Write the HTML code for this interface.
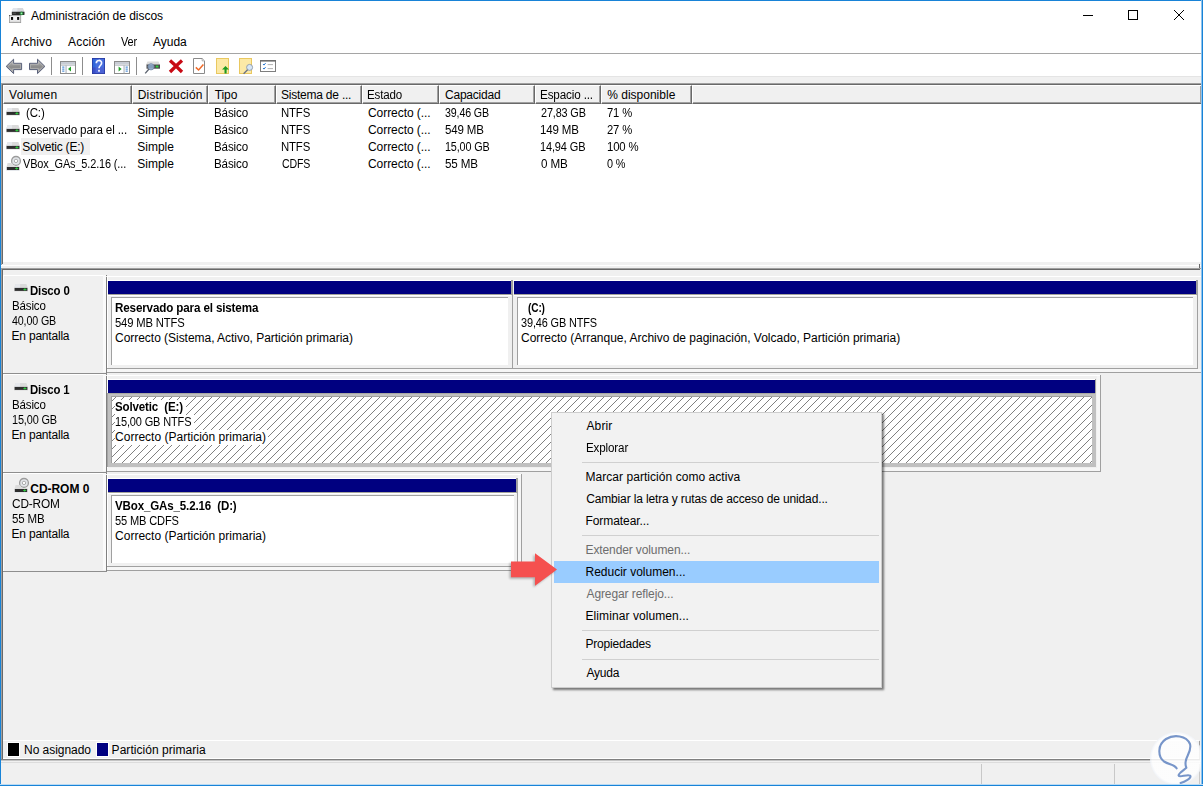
<!DOCTYPE html>
<html lang="es">
<head>
<meta charset="utf-8">
<title>Administración de discos</title>
<style>
html,body{margin:0;padding:0;overflow:hidden;}
html{width:1203px;height:786px;}
body{width:1203px;height:786px;position:relative;overflow:hidden;background:#fff;
 font-family:"Liberation Sans",sans-serif;font-size:12px;color:#000;}
.a{position:absolute;}
.t{position:absolute;white-space:nowrap;line-height:15px;height:15px;transform-origin:0 0;}
.g{background:#f0f0f0;}
.w{background:#fff;}
.d1{background:#a0a0a0;}
.d2{background:#696969;}
.nv{background:#000080;}
.hc{position:absolute;top:85px;height:19px;box-sizing:border-box;background:#f0f0f0;
 border-top:1px solid #fff;border-left:1px solid #fff;border-bottom:1px solid #696969;border-right:1px solid #696969;}
.hc:after{content:"";position:absolute;right:0;top:0;bottom:0;width:1px;background:#a0a0a0;}
.hc:before{content:"";position:absolute;left:0;right:0;bottom:0;height:1px;background:#a0a0a0;}
.pb{position:absolute;box-sizing:border-box;background:#fff;border-top:1px solid #a0a0a0;border-left:1px solid #a0a0a0;}
.mi{position:absolute;left:552px;}
.sep{position:absolute;left:582px;width:297px;height:1px;background:#d0d0d0;}
svg{position:absolute;overflow:visible;}
</style>
</head>
<body>

<!-- ===== window chrome ===== -->
<div class="a g" style="left:0;top:262px;width:1203px;height:524px;"></div>
<div class="a g" style="left:0;top:77px;width:1203px;height:8px;"></div>
<div class="a" style="left:0;top:76px;width:1203px;height:1px;background:#e4e4e4;"></div>
<div class="a" style="left:0;top:53px;width:1203px;height:1px;background:#a5a5a5;"></div>

<!-- title bar icon -->
<svg style="left:5px;top:4px;" width="30" height="24" viewBox="5 4 30 24">
 <path d="M13.1 8H22.9L24.6 11.9H11.6Z" fill="#d6d8dc"/>
 <path d="M13.1 8H17.5L17.2 11.9H11.6Z" fill="#e2e6ec"/>
 <rect x="11.8" y="11.7" width="12.7" height="3.3" rx="0.4" fill="#2c2c2c"/>
 <rect x="12.6" y="12.6" width="3.4" height="1.4" fill="#4a4a4a"/>
 <circle cx="21.5" cy="13.4" r="1.9" fill="#1f8f38" opacity="0.75"/>
 <circle cx="21.5" cy="13.4" r="0.9" fill="#9af0a8"/>
 <rect x="9.4" y="15.5" width="11.3" height="7.1" fill="#dcdcdc" stroke="#9a9a9a" stroke-width="0.8"/>
 <rect x="10.2" y="16.3" width="9.7" height="4.2" fill="#f4f4f6"/>
 <rect x="11" y="17" width="2.1" height="2.9" fill="#0c0c0c"/>
 <rect x="17.1" y="17" width="2.1" height="2.9" fill="#0c0c0c"/>
 <rect x="9" y="15.1" width="1" height="1" fill="#555"/>
</svg>

<!-- caption buttons -->
<div class="a" style="left:1083px;top:15px;width:10px;height:1px;background:#000;"></div>
<div class="a" style="left:1128px;top:10px;width:10px;height:10px;box-sizing:border-box;border:1px solid #000;"></div>
<svg style="left:1173px;top:9px;" width="12" height="12" viewBox="0 0 12 12"><path d="M1 1L11 11M11 1L1 11" stroke="#000" stroke-width="1" fill="none"/></svg>

<!-- ===== toolbar ===== -->
<svg style="left:0;top:54px;" width="300" height="23" viewBox="0 54 300 23">
 <defs>
  <linearGradient id="ga" x1="0" y1="0" x2="0" y2="1"><stop offset="0" stop-color="#bdbdbd"/><stop offset="0.55" stop-color="#8a8a8a"/><stop offset="1" stop-color="#b0b0b0"/></linearGradient>
  <linearGradient id="gh" x1="0" y1="0" x2="1" y2="1"><stop offset="0" stop-color="#2f6fe0"/><stop offset="1" stop-color="#5a5ad0"/></linearGradient>
 </defs>
 <!-- back / forward -->
 <path d="M6.2 66.4L13.6 59.2V63.3H21.6V69.6H13.6V73.6Z" fill="url(#ga)" stroke="#59607a" stroke-width="1" stroke-linejoin="round"/><path d="M7.8 66.4L12.7 61.6V64.3H20.6V68.6H12.7V71.2Z" fill="none" stroke="#c9c9c9" stroke-width="0.6" opacity="0.8"/>
 <path d="M44.9 66.4L37.5 59.2V63.3H29.5V69.6H37.5V73.6Z" fill="url(#ga)" stroke="#59607a" stroke-width="1" stroke-linejoin="round"/><path d="M43.3 66.4L38.4 61.6V64.3H30.5V68.6H38.4V71.2Z" fill="none" stroke="#c9c9c9" stroke-width="0.6" opacity="0.8"/>
 <rect x="51" y="57" width="1" height="18" fill="#8d8d8d"/>
 <!-- show/hide console tree -->
 <g>
  <rect x="60.5" y="61.5" width="15" height="12" fill="#fff" stroke="#8c8c8c"/>
  <rect x="61" y="62" width="14" height="2" fill="#c8ccd4"/>
  <rect x="61" y="64.6" width="14" height="0.9" fill="#9aa0aa"/>
  <rect x="65.6" y="65.5" width="0.9" height="8" fill="#9aa0aa"/>
  <rect x="62.2" y="66.6" width="2.2" height="1" fill="#2b78d0"/><rect x="62.2" y="68.6" width="2.2" height="1" fill="#2b78d0"/><rect x="62.2" y="70.6" width="2.2" height="1" fill="#2b78d0"/>
  <path d="M71 66.6V71.6L68 69.1Z" fill="#1e9e24"/>
 </g>
 <rect x="82" y="57" width="1" height="18" fill="#8d8d8d"/>
 <!-- help -->
 <g>
  <rect x="92" y="58" width="13" height="16" fill="#3a4fc8"/>
  <rect x="92" y="58" width="13" height="9.5" fill="#2f66dc"/>
  <rect x="95.5" y="58" width="9.5" height="16" fill="#5a74e0" opacity="0.55"/>
  <rect x="92.4" y="58.4" width="12.2" height="15.2" fill="none" stroke="#2a3aa0" stroke-width="0.8"/>
  <path d="M96.3 63.2C96.3 59.6 101.6 59.6 101.6 63C101.6 65.4 99 65.6 99 68.2" fill="none" stroke="#f4f6ff" stroke-width="1.7"/>
  <rect x="98.1" y="69.8" width="1.8" height="1.9" fill="#f4f6ff"/>
 </g>
 <!-- show/hide action pane -->
 <g>
  <rect x="114.5" y="61.5" width="15" height="12" fill="#fff" stroke="#8c8c8c"/>
  <rect x="115" y="62" width="14" height="2" fill="#c8ccd4"/>
  <rect x="115" y="64.6" width="14" height="0.9" fill="#9aa0aa"/>
  <rect x="123.6" y="65.5" width="0.9" height="8" fill="#9aa0aa"/>
  <rect x="125.6" y="66.6" width="2.2" height="1" fill="#2b78d0"/><rect x="125.6" y="68.6" width="2.2" height="1" fill="#2b78d0"/><rect x="125.6" y="70.6" width="2.2" height="1" fill="#2b78d0"/>
  <path d="M118.6 66.6V71.6L121.6 69.1Z" fill="#1e9e24"/>
 </g>
 <rect x="136" y="57" width="1" height="18" fill="#8d8d8d"/>
 <!-- rescan (drive + magnifier) -->
 <g>
  <path d="M147.5 61.5h11l1.5 3.2h-14z" fill="#dcdcdc"/>
  <rect x="146.5" y="64.5" width="13.5" height="4.2" fill="#4a4a4a"/>
  <rect x="155.8" y="65.6" width="2.6" height="1.9" fill="#2fd13f"/>
  <circle cx="151" cy="66.8" r="3.1" fill="#9dbfe8" fill-opacity="0.72" stroke="#7488a6" stroke-width="0.9"/>
  <path d="M149 69L145.2 73.4" stroke="#5d6470" stroke-width="1.3"/>
 </g>
 <!-- delete -->
 <path d="M170 60.5L176 66L182 60.5M170 72L176 66L182 72" fill="none" stroke="#c80a14" stroke-width="3.3"/>
 <!-- properties (doc + check) -->
 <g>
  <path d="M193.5 58.5h8.6l2.4 2.4v12.6h-11z" fill="#fff" stroke="#8a8a8a" stroke-linejoin="miter"/>
  <path d="M202.1 58.5v2.4h2.4" fill="#eee" stroke="#9a9a9a" stroke-width="0.7"/>
  <path d="M195.8 67.4L198.6 70L203.4 64.6" fill="none" stroke="#f06a28" stroke-width="1.5"/>
 </g>
 <!-- folder up -->
 <g>
  <rect x="216.5" y="58.5" width="12" height="15" fill="#fce9a6" stroke="#e9c860"/>
  <path d="M225.5 73.5V69.5H223L226.5 66L230 69.5H227.6V73.5Z" fill="#1c9a20" transform="translate(-1,0)"/>
 </g>
 <!-- folder search -->
 <g>
  <rect x="239.5" y="58.5" width="12" height="15" fill="#fce9a6" stroke="#e9c860"/>
  <circle cx="249.6" cy="67.4" r="3" fill="#d6e6f6" stroke="#8c98ac" stroke-width="0.9"/>
  <path d="M247.6 69.8L243.6 73.8" stroke="#6a7280" stroke-width="1.3"/>
 </g>
 <!-- options list -->
 <g>
  <rect x="260.5" y="60.5" width="15" height="11" fill="#fff" stroke="#7e7e7e"/>
  <rect x="260" y="60" width="16" height="1.6" fill="#6e6e6e"/>
  <path d="M263 64l1 1.1l1.6-2M263 68l1 1.1l1.6-2" fill="none" stroke="#2b78d0" stroke-width="1"/>
  <rect x="267.6" y="64.2" width="5.4" height="0.9" fill="#a8a8a8"/><rect x="267.6" y="68.2" width="5.4" height="0.9" fill="#a8a8a8"/>
 </g>
</svg>

<!-- ===== upper list view ===== -->
<div class="a w" style="left:3px;top:104px;width:1198px;height:158px;"></div>
<div class="a d1" style="left:1px;top:83px;width:1200px;height:1px;"></div>
<div class="a d2" style="left:2px;top:84px;width:1199px;height:1px;"></div>
<div class="a d1" style="left:1px;top:83px;width:1px;height:182px;"></div>
<div class="a d2" style="left:2px;top:84px;width:1px;height:180px;"></div>
<div class="a w" style="left:1px;top:265px;width:1200px;height:1px;"></div>
<div class="a d2" style="left:1199px;top:264px;width:1px;height:4px;"></div>
<!-- header cells -->
<div class="hc" style="left:3px;width:129px;"></div>
<div class="hc" style="left:132px;width:76px;"></div>
<div class="hc" style="left:208px;width:68px;"></div>
<div class="hc" style="left:276px;width:86px;"></div>
<div class="hc" style="left:362px;width:77px;"></div>
<div class="hc" style="left:439px;width:96px;"></div>
<div class="hc" style="left:535px;width:66px;"></div>
<div class="hc" style="left:601px;width:91px;"></div>
<div class="hc" style="left:692px;width:509px;border-right:none;"></div>
<!-- selected (unfocused) row label -->
<div class="a g" style="left:21px;top:138px;width:69px;height:17px;"></div>
<!-- row icons -->
<svg style="left:6px;top:104px;" width="14" height="68" viewBox="0 0 14 68">
 
 <g transform="translate(0,4)"><path d="M1.6 0h10.8l1.5 3.9v3.6h-13.8v-3.6z" fill="#dadada"/><path d="M1.6 0h4.6l-0.3 3.9h-5.8z" fill="#e6e8ec"/><rect x="0.6" y="3.9" width="12.8" height="3" fill="#2e2e2e"/><rect x="9.4" y="5" width="3" height="0.9" fill="#2fd13f"/><rect x="10.4" y="4.2" width="1" height="2.4" fill="#2fd13f"/></g>
 <g transform="translate(0,21)"><path d="M1.6 0h10.8l1.5 3.9v3.6h-13.8v-3.6z" fill="#dadada"/><path d="M1.6 0h4.6l-0.3 3.9h-5.8z" fill="#e6e8ec"/><rect x="0.6" y="3.9" width="12.8" height="3" fill="#2e2e2e"/><rect x="9.4" y="5" width="3" height="0.9" fill="#2fd13f"/><rect x="10.4" y="4.2" width="1" height="2.4" fill="#2fd13f"/></g>
 <g transform="translate(0,38)"><path d="M1.6 0h10.8l1.5 3.9v3.6h-13.8v-3.6z" fill="#dadada"/><path d="M1.6 0h4.6l-0.3 3.9h-5.8z" fill="#e6e8ec"/><rect x="0.6" y="3.9" width="12.8" height="3" fill="#2e2e2e"/><rect x="9.4" y="5" width="3" height="0.9" fill="#2fd13f"/><rect x="10.4" y="4.2" width="1" height="2.4" fill="#2fd13f"/></g>
</svg>

<!-- ===== lower graphical view ===== -->
<div class="a d1" style="left:1px;top:268px;width:1200px;height:1px;"></div>
<div class="a d2" style="left:2px;top:269px;width:1198px;height:1px;"></div>
<div class="a d1" style="left:1px;top:268px;width:1px;height:492px;"></div>
<div class="a d2" style="left:2px;top:269px;width:1px;height:491px;"></div>
<div class="a d1" style="left:1199px;top:741px;width:1px;height:19px;"></div>

<!-- disk label frames -->
<div class="a" style="left:3px;top:275px;width:103px;height:1px;background:#fff;"></div>
<div class="a" style="left:103px;top:275px;width:3px;height:97px;background:#fafafa;"></div>
<div class="a" style="left:106px;top:275px;width:1px;height:1px;background:#808080;"></div>
<div class="a" style="left:106px;top:277px;width:1px;height:96px;background:#808080;"></div>
<div class="a" style="left:3px;top:373px;width:104px;height:1px;background:#8e8e8e;"></div>
<div class="a" style="left:3px;top:275px;width:1px;height:98px;background:#fff;"></div>
<div class="a" style="left:107px;top:276px;width:1094px;height:1px;background:#fff;"></div>
<div class="a" style="left:107px;top:276px;width:1px;height:96px;background:#fff;"></div>
<div class="a" style="left:107px;top:369px;width:1094px;height:3px;background:#f6f6f6;"></div>
<div class="a" style="left:107px;top:372px;width:1095px;height:1px;background:#a0a0a0;"></div>
<div class="a" style="left:107px;top:368px;width:1091px;height:1px;background:#a0a0a0;"></div>
<div class="a" style="left:107px;top:280px;width:405px;height:1px;background:#fff;"></div>
<div class="a" style="left:108px;top:281px;width:403px;height:13px;background:#000080;"></div>
<div class="a" style="left:511px;top:280px;width:2px;height:15px;background:#a0a0a0;"></div>
<div class="a" style="left:512px;top:295px;width:1px;height:74px;background:#a0a0a0;"></div>
<div class="a" style="left:108px;top:294px;width:403px;height:1px;background:#a4a49c;"></div>
<div class="a" style="left:108px;top:295px;width:403px;height:1px;background:#fff;"></div>
<div class="pb" style="left:111px;top:297px;width:397px;height:68px;"></div>
<div class="a" style="left:513px;top:280px;width:684px;height:1px;background:#fff;"></div>
<div class="a" style="left:514px;top:281px;width:682px;height:13px;background:#000080;"></div>
<div class="a" style="left:1196px;top:280px;width:2px;height:15px;background:#a0a0a0;"></div>
<div class="a" style="left:1197px;top:295px;width:1px;height:74px;background:#a0a0a0;"></div>
<div class="a" style="left:514px;top:294px;width:682px;height:1px;background:#a4a49c;"></div>
<div class="a" style="left:514px;top:295px;width:682px;height:1px;background:#fff;"></div>
<div class="pb" style="left:517px;top:297px;width:676px;height:68px;"></div>
<div class="a" style="left:3px;top:374px;width:103px;height:1px;background:#fff;"></div>
<div class="a" style="left:103px;top:374px;width:3px;height:97px;background:#fafafa;"></div>
<div class="a" style="left:106px;top:374px;width:1px;height:1px;background:#808080;"></div>
<div class="a" style="left:106px;top:376px;width:1px;height:96px;background:#808080;"></div>
<div class="a" style="left:3px;top:472px;width:104px;height:1px;background:#8e8e8e;"></div>
<div class="a" style="left:3px;top:374px;width:1px;height:98px;background:#fff;"></div>
<div class="a" style="left:107px;top:375px;width:993px;height:1px;background:#fff;"></div>
<div class="a" style="left:107px;top:375px;width:1px;height:96px;background:#fff;"></div>
<div class="a" style="left:107px;top:468px;width:993px;height:3px;background:#f6f6f6;"></div>
<div class="a" style="left:107px;top:471px;width:994px;height:1px;background:#a0a0a0;"></div>
<div class="a" style="left:1097px;top:376px;width:3px;height:95px;background:#f6f6f6;"></div>
<div class="a" style="left:1100px;top:375px;width:1px;height:97px;background:#a0a0a0;"></div>
<div class="a" style="left:107px;top:379px;width:989px;height:1px;background:#fff;"></div>
<div class="a" style="left:108px;top:380px;width:987px;height:13px;background:#000080;"></div>
<div class="a" style="left:1095px;top:379px;width:1px;height:15px;background:#a0a0a0;"></div>
<div class="a" style="left:107px;top:393px;width:989px;height:74px;background:#c0c0c0;"></div>
<div class="a" style="left:107px;top:393px;width:988px;height:1px;background:#a8a8a4;"></div>
<div class="a" style="left:107px;top:393px;width:1px;height:74px;background:#a4a4a4;"></div>
<div class="a" style="left:111px;top:396px;width:981px;height:67px;background:#a0a0a0;"></div>
<div class="a" style="left:112px;top:397px;width:980px;height:66px;background:#fff;"></div>
<svg style="left:0;top:0;" width="1203" height="786"><defs><pattern id="hat" width="8" height="8" patternUnits="userSpaceOnUse" shape-rendering="crispEdges"><rect x="0" y="0" width="1" height="1" fill="#808080"/><rect x="1" y="7" width="1" height="1" fill="#808080"/><rect x="2" y="6" width="1" height="1" fill="#808080"/><rect x="3" y="5" width="1" height="1" fill="#808080"/><rect x="4" y="4" width="1" height="1" fill="#808080"/><rect x="5" y="3" width="1" height="1" fill="#808080"/><rect x="6" y="2" width="1" height="1" fill="#808080"/><rect x="7" y="1" width="1" height="1" fill="#808080"/></pattern></defs><rect x="112" y="397" width="980" height="66" fill="url(#hat)" shape-rendering="crispEdges"/></svg>
<div class="a" style="left:115px;top:400px;width:71px;height:15px;background:#fff;"></div>
<div class="a" style="left:115px;top:415px;width:79px;height:15px;background:#fff;"></div>
<div class="a" style="left:115px;top:430px;width:153px;height:15px;background:#fff;"></div>
<div class="a" style="left:3px;top:473px;width:103px;height:1px;background:#fff;"></div>
<div class="a" style="left:103px;top:473px;width:3px;height:97px;background:#fafafa;"></div>
<div class="a" style="left:106px;top:473px;width:1px;height:1px;background:#808080;"></div>
<div class="a" style="left:106px;top:475px;width:1px;height:96px;background:#808080;"></div>
<div class="a" style="left:3px;top:571px;width:104px;height:1px;background:#8e8e8e;"></div>
<div class="a" style="left:3px;top:473px;width:1px;height:98px;background:#fff;"></div>
<div class="a" style="left:107px;top:474px;width:414px;height:1px;background:#fff;"></div>
<div class="a" style="left:107px;top:474px;width:1px;height:96px;background:#fff;"></div>
<div class="a" style="left:107px;top:567px;width:414px;height:3px;background:#f6f6f6;"></div>
<div class="a" style="left:107px;top:570px;width:415px;height:1px;background:#a0a0a0;"></div>
<div class="a" style="left:518px;top:475px;width:3px;height:95px;background:#f6f6f6;"></div>
<div class="a" style="left:521px;top:474px;width:1px;height:97px;background:#a0a0a0;"></div>
<div class="a" style="left:107px;top:566px;width:411px;height:1px;background:#a0a0a0;"></div>
<div class="a" style="left:107px;top:478px;width:410px;height:1px;background:#fff;"></div>
<div class="a" style="left:108px;top:479px;width:408px;height:13px;background:#000080;"></div>
<div class="a" style="left:516px;top:478px;width:2px;height:15px;background:#a0a0a0;"></div>
<div class="a" style="left:517px;top:493px;width:1px;height:74px;background:#a0a0a0;"></div>
<div class="a" style="left:108px;top:492px;width:408px;height:1px;background:#a4a49c;"></div>
<div class="a" style="left:108px;top:493px;width:408px;height:1px;background:#fff;"></div>
<div class="pb" style="left:111px;top:495px;width:403px;height:68px;"></div>
<svg style="left:14px;top:284px;" width="14" height="8" viewBox="0 0 14 8"><path d="M1.6 0h10.8l1.5 3.9v3.6h-13.8v-3.6z" fill="#dadada"/><path d="M1.6 0h4.6l-0.3 3.9h-5.8z" fill="#e6e8ec"/><rect x="0.6" y="3.9" width="12.8" height="3" fill="#2e2e2e"/><rect x="9.4" y="5" width="3" height="0.9" fill="#2fd13f"/><rect x="10.4" y="4.2" width="1" height="2.4" fill="#2fd13f"/></svg>
<svg style="left:14px;top:383px;" width="14" height="8" viewBox="0 0 14 8"><path d="M1.6 0h10.8l1.5 3.9v3.6h-13.8v-3.6z" fill="#dadada"/><path d="M1.6 0h4.6l-0.3 3.9h-5.8z" fill="#e6e8ec"/><rect x="0.6" y="3.9" width="12.8" height="3" fill="#2e2e2e"/><rect x="9.4" y="5" width="3" height="0.9" fill="#2fd13f"/><rect x="10.4" y="4.2" width="1" height="2.4" fill="#2fd13f"/></svg>
<svg style="left:14px;top:478px;" width="15" height="15" viewBox="0 0 15 15"><circle cx="10" cy="4.9" r="4.4" fill="#e3e6ea" stroke="#9c9c9c" stroke-width="1.3"/><circle cx="10" cy="4.9" r="1.7" fill="#fff" stroke="#9a9a9a" stroke-width="0.8"/><path d="M1.6 7h4.6c0.5 2 2 3.2 3.8 3.2c1.2 0 2.2-0.4 3-1.2l0.6 2.2h-13.2z" fill="#dcdcdc"/><rect x="0.8" y="11" width="12.4" height="3" fill="#2e2e2e"/><rect x="9.2" y="12.05" width="3" height="0.9" fill="#2fd13f"/><rect x="10.25" y="11.3" width="0.9" height="2.4" fill="#2fd13f"/><rect x="0.4" y="14" width="13.2" height="0.8" fill="#dfe3e8"/></svg>
<svg style="left:6px;top:155.5px;" width="15" height="15" viewBox="0 0 15 15"><circle cx="10" cy="4.9" r="4.4" fill="#e3e6ea" stroke="#9c9c9c" stroke-width="1.3"/><circle cx="10" cy="4.9" r="1.7" fill="#fff" stroke="#9a9a9a" stroke-width="0.8"/><path d="M1.6 7h4.6c0.5 2 2 3.2 3.8 3.2c1.2 0 2.2-0.4 3-1.2l0.6 2.2h-13.2z" fill="#dcdcdc"/><rect x="0.8" y="11" width="12.4" height="3" fill="#2e2e2e"/><rect x="9.2" y="12.05" width="3" height="0.9" fill="#2fd13f"/><rect x="10.25" y="11.3" width="0.9" height="2.4" fill="#2fd13f"/><rect x="0.4" y="14" width="13.2" height="0.8" fill="#dfe3e8"/></svg>
<div class="a" style="left:3px;top:740px;width:1196px;height:1px;background:#fff;"></div>
<div class="a" style="left:7px;top:742px;width:13px;height:15px;background:#fff;"></div>
<div class="a" style="left:8px;top:743px;width:11px;height:13px;background:#000;"></div>
<div class="a" style="left:96px;top:742px;width:13px;height:15px;background:#fff;"></div>
<div class="a" style="left:97px;top:743px;width:11px;height:13px;background:#000080;"></div>
<div class="a" style="left:3px;top:758px;width:1196px;height:1px;background:#fff;"></div>
<div class="a" style="left:1px;top:759px;width:1199px;height:1px;background:#808080;"></div>
<div class="a" style="left:1px;top:760px;width:1199px;height:1px;background:#c4c4c4;"></div>
<div class="a" style="left:1px;top:762px;width:1201px;height:1px;background:#dcdcdc;"></div>
<div class="a" style="left:981px;top:764px;width:1px;height:21px;background:#c8c8c8;"></div>
<div class="a" style="left:1114px;top:764px;width:1px;height:21px;background:#c8c8c8;"></div>
<div class="a" style="left:1199px;top:764px;width:1px;height:21px;background:#c8c8c8;"></div>

<span class="t" id="t0" style="left:30.98px;top:9.00px;letter-spacing:-0.027px;">Administración de discos</span>
<span class="t" id="t1" style="left:11.28px;top:35.00px;letter-spacing:0.091px;">Archivo</span>
<span class="t" id="t2" style="left:67.98px;top:35.00px;letter-spacing:0.209px;">Acción</span>
<span class="t" id="t3" style="left:120.97px;top:35.00px;transform:scaleX(0.9053);letter-spacing:-0.150px;">Ver</span>
<span class="t" id="t4" style="left:152.98px;top:35.00px;letter-spacing:0.005px;">Ayuda</span>
<span class="t" id="t5" style="left:9.07px;top:88.00px;letter-spacing:0.238px;">Volumen</span>
<span class="t" id="t6" style="left:137.70px;top:88.00px;letter-spacing:0.191px;">Distribución</span>
<span class="t" id="t7" style="left:214.77px;top:88.00px;letter-spacing:-0.116px;">Tipo</span>
<span class="t" id="t8" style="left:281.00px;top:88.00px;letter-spacing:-0.226px;">Sistema de ...</span>
<span class="t" id="t9" style="left:367.34px;top:88.00px;transform:scaleX(0.9645);letter-spacing:-0.150px;">Estado</span>
<span class="t" id="t10" style="left:445.04px;top:88.00px;letter-spacing:-0.226px;">Capacidad</span>
<span class="t" id="t11" style="left:540.43px;top:88.00px;transform:scaleX(0.9733);letter-spacing:-0.150px;">Espacio ...</span>
<span class="t" id="t12" style="left:607.27px;top:88.00px;letter-spacing:-0.001px;">% disponible</span>
<span class="t" id="t13" style="left:26.15px;top:106.00px;transform:scaleX(0.9571);letter-spacing:-0.150px;">(C:)</span>
<span class="t" id="t14" style="left:137.30px;top:106.00px;letter-spacing:-0.029px;">Simple</span>
<span class="t" id="t15" style="left:213.83px;top:106.00px;transform:scaleX(0.967);letter-spacing:-0.150px;">Básico</span>
<span class="t" id="t16" style="left:281.05px;top:106.00px;transform:scaleX(0.9476);letter-spacing:-0.150px;">NTFS</span>
<span class="t" id="t17" style="left:367.94px;top:106.00px;letter-spacing:-0.048px;">Correcto (...</span>
<span class="t" id="t18" style="left:445.05px;top:106.00px;transform:scaleX(0.8884);letter-spacing:-0.150px;">39,46 GB</span>
<span class="t" id="t19" style="left:541.08px;top:106.00px;transform:scaleX(0.904);letter-spacing:-0.150px;">27,83 GB</span>
<span class="t" id="t20" style="left:607.19px;top:106.00px;transform:scaleX(0.9359);letter-spacing:-0.150px;">71 %</span>
<span class="t" id="t21" style="left:22.33px;top:123.00px;transform:scaleX(0.9697);letter-spacing:-0.150px;">Reservado para el ...</span>
<span class="t" id="t22" style="left:137.30px;top:123.00px;letter-spacing:-0.029px;">Simple</span>
<span class="t" id="t23" style="left:213.83px;top:123.00px;transform:scaleX(0.967);letter-spacing:-0.150px;">Básico</span>
<span class="t" id="t24" style="left:281.05px;top:123.00px;transform:scaleX(0.9476);letter-spacing:-0.150px;">NTFS</span>
<span class="t" id="t25" style="left:367.94px;top:123.00px;letter-spacing:-0.048px;">Correcto (...</span>
<span class="t" id="t26" style="left:444.99px;top:123.00px;transform:scaleX(0.9587);letter-spacing:-0.150px;">549 MB</span>
<span class="t" id="t27" style="left:540.44px;top:123.00px;transform:scaleX(0.9598);letter-spacing:-0.150px;">149 MB</span>
<span class="t" id="t28" style="left:607.17px;top:123.00px;transform:scaleX(0.9366);letter-spacing:-0.150px;">27 %</span>
<span class="t" id="t29" style="left:22.30px;top:140.00px;letter-spacing:-0.225px;">Solvetic (E:)</span>
<span class="t" id="t30" style="left:137.30px;top:140.00px;letter-spacing:-0.029px;">Simple</span>
<span class="t" id="t31" style="left:213.83px;top:140.00px;transform:scaleX(0.967);letter-spacing:-0.150px;">Básico</span>
<span class="t" id="t32" style="left:281.05px;top:140.00px;transform:scaleX(0.9476);letter-spacing:-0.150px;">NTFS</span>
<span class="t" id="t33" style="left:367.94px;top:140.00px;letter-spacing:-0.048px;">Correcto (...</span>
<span class="t" id="t34" style="left:444.50px;top:140.00px;transform:scaleX(0.8996);letter-spacing:-0.150px;">15,00 GB</span>
<span class="t" id="t35" style="left:540.48px;top:140.00px;transform:scaleX(0.9161);letter-spacing:-0.150px;">14,94 GB</span>
<span class="t" id="t36" style="left:606.55px;top:140.00px;transform:scaleX(0.9476);letter-spacing:-0.150px;">100 %</span>
<span class="t" id="t37" style="left:23.27px;top:157.00px;transform:scaleX(0.9115);letter-spacing:-0.150px;">VBox_GAs_5.2.16 (...</span>
<span class="t" id="t38" style="left:137.30px;top:157.00px;letter-spacing:-0.029px;">Simple</span>
<span class="t" id="t39" style="left:213.83px;top:157.00px;transform:scaleX(0.967);letter-spacing:-0.150px;">Básico</span>
<span class="t" id="t40" style="left:281.68px;top:157.00px;transform:scaleX(0.8809);letter-spacing:-0.150px;">CDFS</span>
<span class="t" id="t41" style="left:367.94px;top:157.00px;letter-spacing:-0.048px;">Correcto (...</span>
<span class="t" id="t42" style="left:444.98px;top:157.00px;transform:scaleX(0.9677);letter-spacing:-0.150px;">55 MB</span>
<span class="t" id="t43" style="left:541.18px;top:157.00px;transform:scaleX(0.9693);letter-spacing:-0.150px;">0 MB</span>
<span class="t" id="t44" style="left:607.29px;top:157.00px;transform:scaleX(0.9064);letter-spacing:-0.150px;">0 %</span>
<span class="t" id="t45" style="left:30.05px;top:284.00px;transform:scaleX(0.9533);letter-spacing:-0.150px;font-weight:bold;">Disco 0</span>
<span class="t" id="t46" style="left:11.54px;top:299.00px;transform:scaleX(0.9611);letter-spacing:-0.150px;">Básico</span>
<span class="t" id="t47" style="left:12.46px;top:314.00px;transform:scaleX(0.8903);letter-spacing:-0.150px;">40,00 GB</span>
<span class="t" id="t48" style="left:11.50px;top:329.00px;letter-spacing:-0.200px;">En pantalla</span>
<span class="t" id="t49" style="left:30.05px;top:383.00px;transform:scaleX(0.9499);letter-spacing:-0.150px;font-weight:bold;">Disco 1</span>
<span class="t" id="t50" style="left:11.54px;top:398.00px;transform:scaleX(0.9611);letter-spacing:-0.150px;">Básico</span>
<span class="t" id="t51" style="left:11.59px;top:413.00px;transform:scaleX(0.9079);letter-spacing:-0.150px;">15,00 GB</span>
<span class="t" id="t52" style="left:11.50px;top:428.00px;letter-spacing:-0.200px;">En pantalla</span>
<span class="t" id="t53" style="left:30.26px;top:482.00px;letter-spacing:-0.038px;font-weight:bold;">CD-ROM 0</span>
<span class="t" id="t54" style="left:12.14px;top:497.00px;transform:scaleX(0.9862);letter-spacing:-0.150px;">CD-ROM</span>
<span class="t" id="t55" style="left:12.09px;top:512.00px;transform:scaleX(0.9587);letter-spacing:-0.150px;">55 MB</span>
<span class="t" id="t56" style="left:11.50px;top:527.00px;letter-spacing:-0.200px;">En pantalla</span>
<span class="t" id="t57" style="left:114.94px;top:301.00px;transform:scaleX(0.9698);letter-spacing:-0.150px;font-weight:bold;">Reservado para el sistema</span>
<span class="t" id="t58" style="left:115.00px;top:316.00px;transform:scaleX(0.9354);letter-spacing:-0.150px;">549 MB NTFS</span>
<span class="t" id="t59" style="left:115.04px;top:331.00px;letter-spacing:-0.034px;">Correcto (Sistema, Activo, Partición primaria)</span>
<span class="t" id="t60" style="left:527.71px;top:301.00px;transform:scaleX(0.8403);letter-spacing:-0.150px;font-weight:bold;">(C:)</span>
<span class="t" id="t61" style="left:521.04px;top:316.00px;transform:scaleX(0.9105);letter-spacing:-0.150px;">39,46 GB NTFS</span>
<span class="t" id="t62" style="left:521.04px;top:331.00px;letter-spacing:-0.015px;">Correcto (Arranque, Archivo de paginación, Volcado, Partición primaria)</span>
<span class="t" id="t63" style="left:115.00px;top:400.00px;transform:scaleX(0.9617);letter-spacing:-0.150px;font-weight:bold;">Solvetic  (E:)</span>
<span class="t" id="t64" style="left:115.09px;top:415.00px;transform:scaleX(0.9149);letter-spacing:-0.150px;">15,00 GB NTFS</span>
<span class="t" id="t65" style="left:115.04px;top:430.00px;letter-spacing:0.009px;">Correcto (Partición primaria)</span>
<span class="t" id="t66" style="left:115.38px;top:499.00px;transform:scaleX(0.9628);letter-spacing:-0.150px;font-weight:bold;">VBox_GAs_5.2.16  (D:)</span>
<span class="t" id="t67" style="left:115.00px;top:514.00px;transform:scaleX(0.9228);letter-spacing:-0.150px;">55 MB CDFS</span>
<span class="t" id="t68" style="left:115.04px;top:529.00px;letter-spacing:0.009px;">Correcto (Partición primaria)</span>
<span class="t" id="t69" style="left:24.00px;top:743.00px;letter-spacing:-0.040px;">No asignado</span>
<span class="t" id="t70" style="left:111.60px;top:743.00px;letter-spacing:0.044px;">Partición primaria</span>
<!-- ===== Solvetic watermark ===== -->
<svg style="left:1146px;top:728px;" width="60" height="60" viewBox="1146 728 60 60">
 <defs><radialGradient id="lg" cx="0.5" cy="0.5" r="0.5"><stop offset="0.9" stop-color="#fff" stop-opacity="0.85"/><stop offset="0.97" stop-color="#f2f5fa" stop-opacity="0.8"/><stop offset="1" stop-color="#eef2f8" stop-opacity="0"/></radialGradient></defs>
 <circle cx="1176.5" cy="758.5" r="27" fill="url(#lg)"/>
 <path d="M1176.6 768.3C1174.5 764.5 1169.5 764.8 1164 761.5C1157.5 756.5 1157.5 744.5 1166 739C1174 734 1186.5 735.5 1190 744C1192 751 1186 756 1185.6 762C1185.2 765.5 1185.8 766 1186.4 767.8C1183.5 770.5 1178.2 773.5 1178.6 775.5C1179.2 778 1187 774 1190 775.6C1192.6 778 1183.8 782 1180.6 783" fill="none" stroke="#6b8cc4" stroke-opacity="0.92" stroke-width="2.1" stroke-linecap="round" stroke-linejoin="round"/>
</svg>

<!-- ===== window border ===== -->
<div class="a" style="left:0;top:0;width:1203px;height:1px;background:#1883d7;"></div>
<div class="a" style="left:0;top:0;width:1px;height:786px;background:#1883d7;"></div>
<div class="a" style="left:1201px;top:0;width:1px;height:786px;background:#8dc3ee;"></div>
<div class="a" style="left:1202px;top:0;width:1px;height:786px;background:#1883d7;"></div>
<div class="a" style="left:0;top:784px;width:1203px;height:1px;background:#b9daf4;"></div>
<div class="a" style="left:0;top:785px;width:1203px;height:1px;background:#1883d7;"></div>

<!-- ===== context menu ===== -->
<div class="a" style="left:551px;top:412px;width:331px;height:276px;box-sizing:border-box;background:#f2f2f2;border:1px solid #cdcdcd;box-shadow:2px 2px 2px rgba(0,0,0,0.5);"></div>
<div class="a" style="left:554px;top:561px;width:325px;height:22px;background:#99ccff;"></div>
<div class="sep" style="top:462px;"></div>
<div class="sep" style="top:535px;"></div>
<div class="sep" style="top:630px;"></div>
<div class="sep" style="top:659px;"></div>

<!-- red arrow -->
<svg style="left:500px;top:545px;" width="70" height="50" viewBox="500 545 70 50">
 <defs><filter id="sh" x="-20%" y="-20%" width="140%" height="140%"><feGaussianBlur stdDeviation="0.9"/></filter></defs>
 <path d="M511 561.5H535V553.3L557 569.4L535 585.8V577.2H511Z" fill="#000" opacity="0.28" filter="url(#sh)" transform="translate(-1.5,1.5)"/>
 <path d="M511 561.5H535V553.3L557 569.4L535 585.8V577.2H511Z" fill="#f5504f"/>
</svg>

<span class="t" id="t71" style="left:586.48px;top:419.00px;letter-spacing:0.130px;">Abrir</span>
<span class="t" id="t72" style="left:585.53px;top:441.00px;transform:scaleX(0.9684);letter-spacing:-0.150px;">Explorar</span>
<span class="t" id="t73" style="left:585.50px;top:470.00px;letter-spacing:0.046px;">Marcar partición como activa</span>
<span class="t" id="t74" style="left:586.14px;top:492.00px;letter-spacing:-0.138px;">Cambiar la letra y rutas de acceso de unidad...</span>
<span class="t" id="t75" style="left:585.50px;top:514.00px;letter-spacing:-0.067px;">Formatear...</span>
<span class="t" id="t76" style="left:585.50px;top:543.00px;letter-spacing:-0.111px;color:#6d6d6d;">Extender volumen...</span>
<span class="t" id="t77" style="left:585.50px;top:565.00px;">Reducir volumen...</span>
<span class="t" id="t78" style="left:586.48px;top:587.00px;letter-spacing:-0.093px;color:#6d6d6d;">Agregar reflejo...</span>
<span class="t" id="t79" style="left:585.50px;top:609.00px;letter-spacing:0.078px;">Eliminar volumen...</span>
<span class="t" id="t80" style="left:585.50px;top:637.00px;letter-spacing:-0.190px;">Propiedades</span>
<span class="t" id="t81" style="left:586.48px;top:666.00px;letter-spacing:-0.195px;">Ayuda</span>
</body>
</html>
